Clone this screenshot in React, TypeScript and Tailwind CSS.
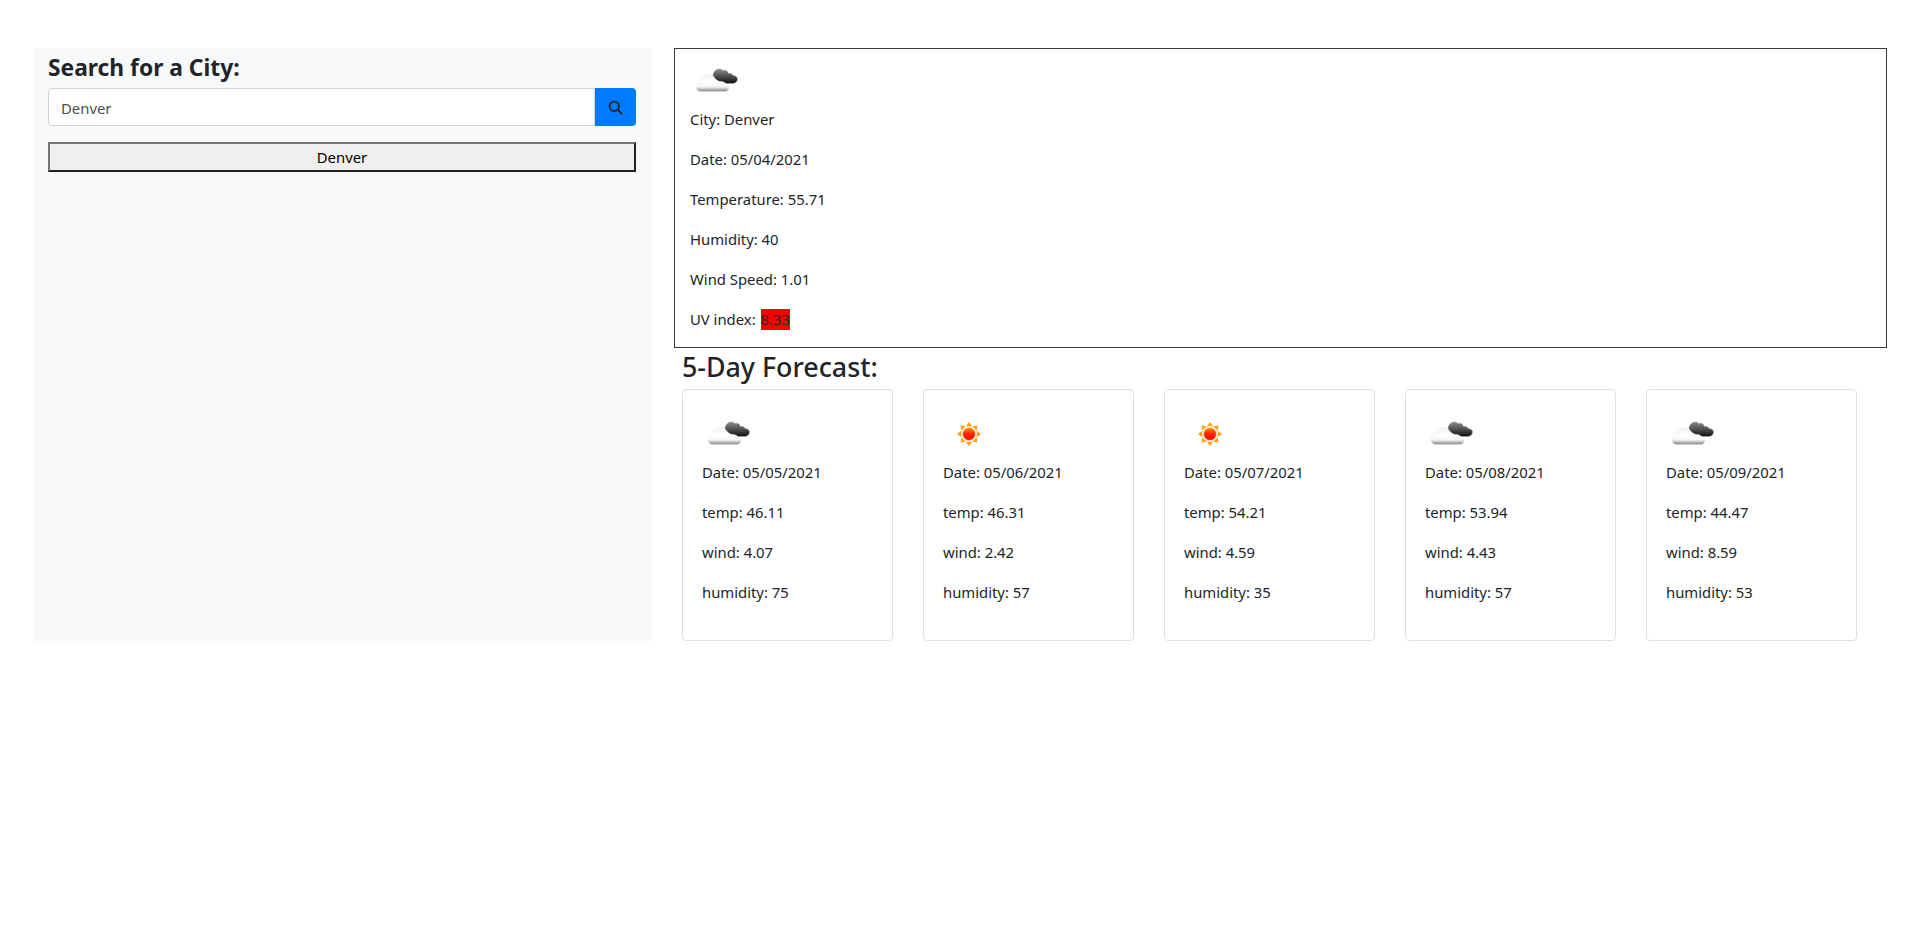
function Cloud({ className = "" }: { className?: string }) {
  return (
    <svg viewBox="0 0 50 50" className={"w-[50px] h-[50px] shrink-0 ml-[1px] " + className}>
      <defs>
        <linearGradient id="cw" x1="0" y1="0" x2="0" y2="1">
          <stop offset="0" stopColor="#f4f4f4" />
          <stop offset="0.45" stopColor="#ffffff" />
          <stop offset="0.72" stopColor="#f4f4f4" />
          <stop offset="0.84" stopColor="#c4c4c4" />
          <stop offset="1" stopColor="#7d7d7d" />
        </linearGradient>
        <linearGradient id="cd" x1="0" y1="0" x2="0" y2="1">
          <stop offset="0" stopColor="#8a8a8a" />
          <stop offset="0.6" stopColor="#444444" />
          <stop offset="1" stopColor="#0d0d0d" />
        </linearGradient>
      </defs>
      <path d="M22 19c0-4 3-7 6-7 2 0 3 .6 4 1.600 1-.6 3-.6 4 .4 1 1 1 2 1.500 2.500 1.500-.5 4 .5 4.500 2 2.500 0 4.500 1.500 4.500 3.500 0 3-2.500 4.500-5 4.500H33c-5 0-11-3-11-7.500z" fill="url(#cd)" stroke="#a8a8a8" strokeWidth="0.6" />
      <path d="M10 34.500c-3 0-5-1.800-5-4.300 0-2.500 2-4.500 4.500-4.700.6-4.500 3.500-7.500 8-7.700 1.800 0 3.200.4 4.500 1.200 1.800 2.600 4 4.800 7 5.500 2.500-.4 5 .6 6 2.500 2 .6 3 2 3 3.700 0 2.200-1.800 3.800-4 3.800z" fill="url(#cw)" stroke="#e4e4e4" strokeWidth="0.5" />
    </svg>
  );
}

function Sun({ className = "" }: { className?: string }) {
  return (
    <svg viewBox="0 0 50 50" className={"w-[50px] h-[50px] shrink-0 " + className}>
      <defs>
        <linearGradient id="sn" x1="0" y1="0" x2="0" y2="1">
          <stop offset="0" stopColor="#ff9a00" />
          <stop offset="0.45" stopColor="#ff2a00" />
          <stop offset="1" stopColor="#ff0000" />
        </linearGradient>
      </defs>
      {[0, 45, 90, 135, 180, 225, 270, 315].map((a) => (
        <polygon key={a} points="22.800,16.300 26,12 29.200,16.300" fill="#ffa21a" transform={`rotate(${a} 26 24)`} />
      ))}
      <circle cx="26" cy="24" r="6.500" fill="url(#sn)" stroke="#ffd9a0" strokeWidth="1" />
    </svg>
  );
}

const days = [
  { d: "05/05/2021", t: "46.11", w: "4.07", h: "75", i: "c" },
  { d: "05/06/2021", t: "46.31", w: "2.42", h: "57", i: "s" },
  { d: "05/07/2021", t: "54.21", w: "4.59", h: "35", i: "s" },
  { d: "05/08/2021", t: "53.94", w: "4.43", h: "57", i: "c" },
  { d: "05/09/2021", t: "44.47", w: "8.59", h: "53", i: "c" },
];

export default function App() {
  return (
    <div className="min-h-[937px] bg-white text-[#212529] text-[14.850px] leading-[24px] font-['Noto_Sans',sans-serif] pt-[48px] pl-[33px] flex items-start gap-[22px]">
      <aside className="w-[619px] h-[593px] bg-[#f8f9fa] pl-[15px] pr-[16px] pt-[6px]">
        <h2 className="text-[22.800px] leading-[28px] font-bold mb-[6px]">Search for a City:</h2>
        <div className="flex h-[38px]">
          <div className="flex-1 bg-white border border-[#ced4da] rounded-l-[4px] px-[12px] pt-[1px] text-[#495057] flex items-center">Denver</div>
          <div className="w-[41px] bg-[#007bff] rounded-r-[4px] flex items-center justify-center">
            <svg viewBox="0 0 16 16" className="w-[15px] h-[15px]" fill="none" stroke="#212529" strokeWidth="2">
              <circle cx="6.700" cy="6.700" r="5" />
              <path d="M10.400 10.400 14.800 14.800" strokeLinecap="round" />
            </svg>
          </div>
        </div>
        <button className="mt-[16px] w-full h-[30px] bg-[#efefef] text-black border-2 border-t-[#767676] border-l-[#767676] border-r-[#212121] border-b-[#212121] flex items-center justify-center">Denver</button>
      </aside>
      <main className="w-[1213px]">
        <section className="h-[300px] border border-[#343a40] px-[15px] pt-[8px] flex flex-col">
          <Cloud />
          <p className="mb-[16px]">City: Denver</p>
          <p className="mb-[16px]">Date: 05/04/2021</p>
          <p className="mb-[16px]">Temperature: 55.71</p>
          <p className="mb-[16px]">Humidity: 40</p>
          <p className="mb-[16px]">Wind Speed: 1.01</p>
          <p>UV index: <span className="inline-block h-[21px] leading-[21px] bg-[#ff0000] ml-[1px]">8.33</span></p>
        </section>
        <h3 className="ml-[8px] text-[26.800px] leading-[34px] font-medium mt-[2px] mb-[5px]">5-Day Forecast:</h3>
        <div className="ml-[8px] flex gap-[30px]">
          {days.map((x) => (
            <div key={x.d} className="w-[211px] h-[252px] border border-[#dfdfdf] rounded-[4px] px-[19px] pt-[20px]">
              {x.i === "c" ? <Cloud /> : <Sun />}
              <p className="mb-[16px]">Date: {x.d}</p>
              <p className="mb-[16px]">temp: {x.t}</p>
              <p className="mb-[16px]">wind: {x.w}</p>
              <p>humidity: {x.h}</p>
            </div>
          ))}
        </div>
      </main>
    </div>
  );
}
